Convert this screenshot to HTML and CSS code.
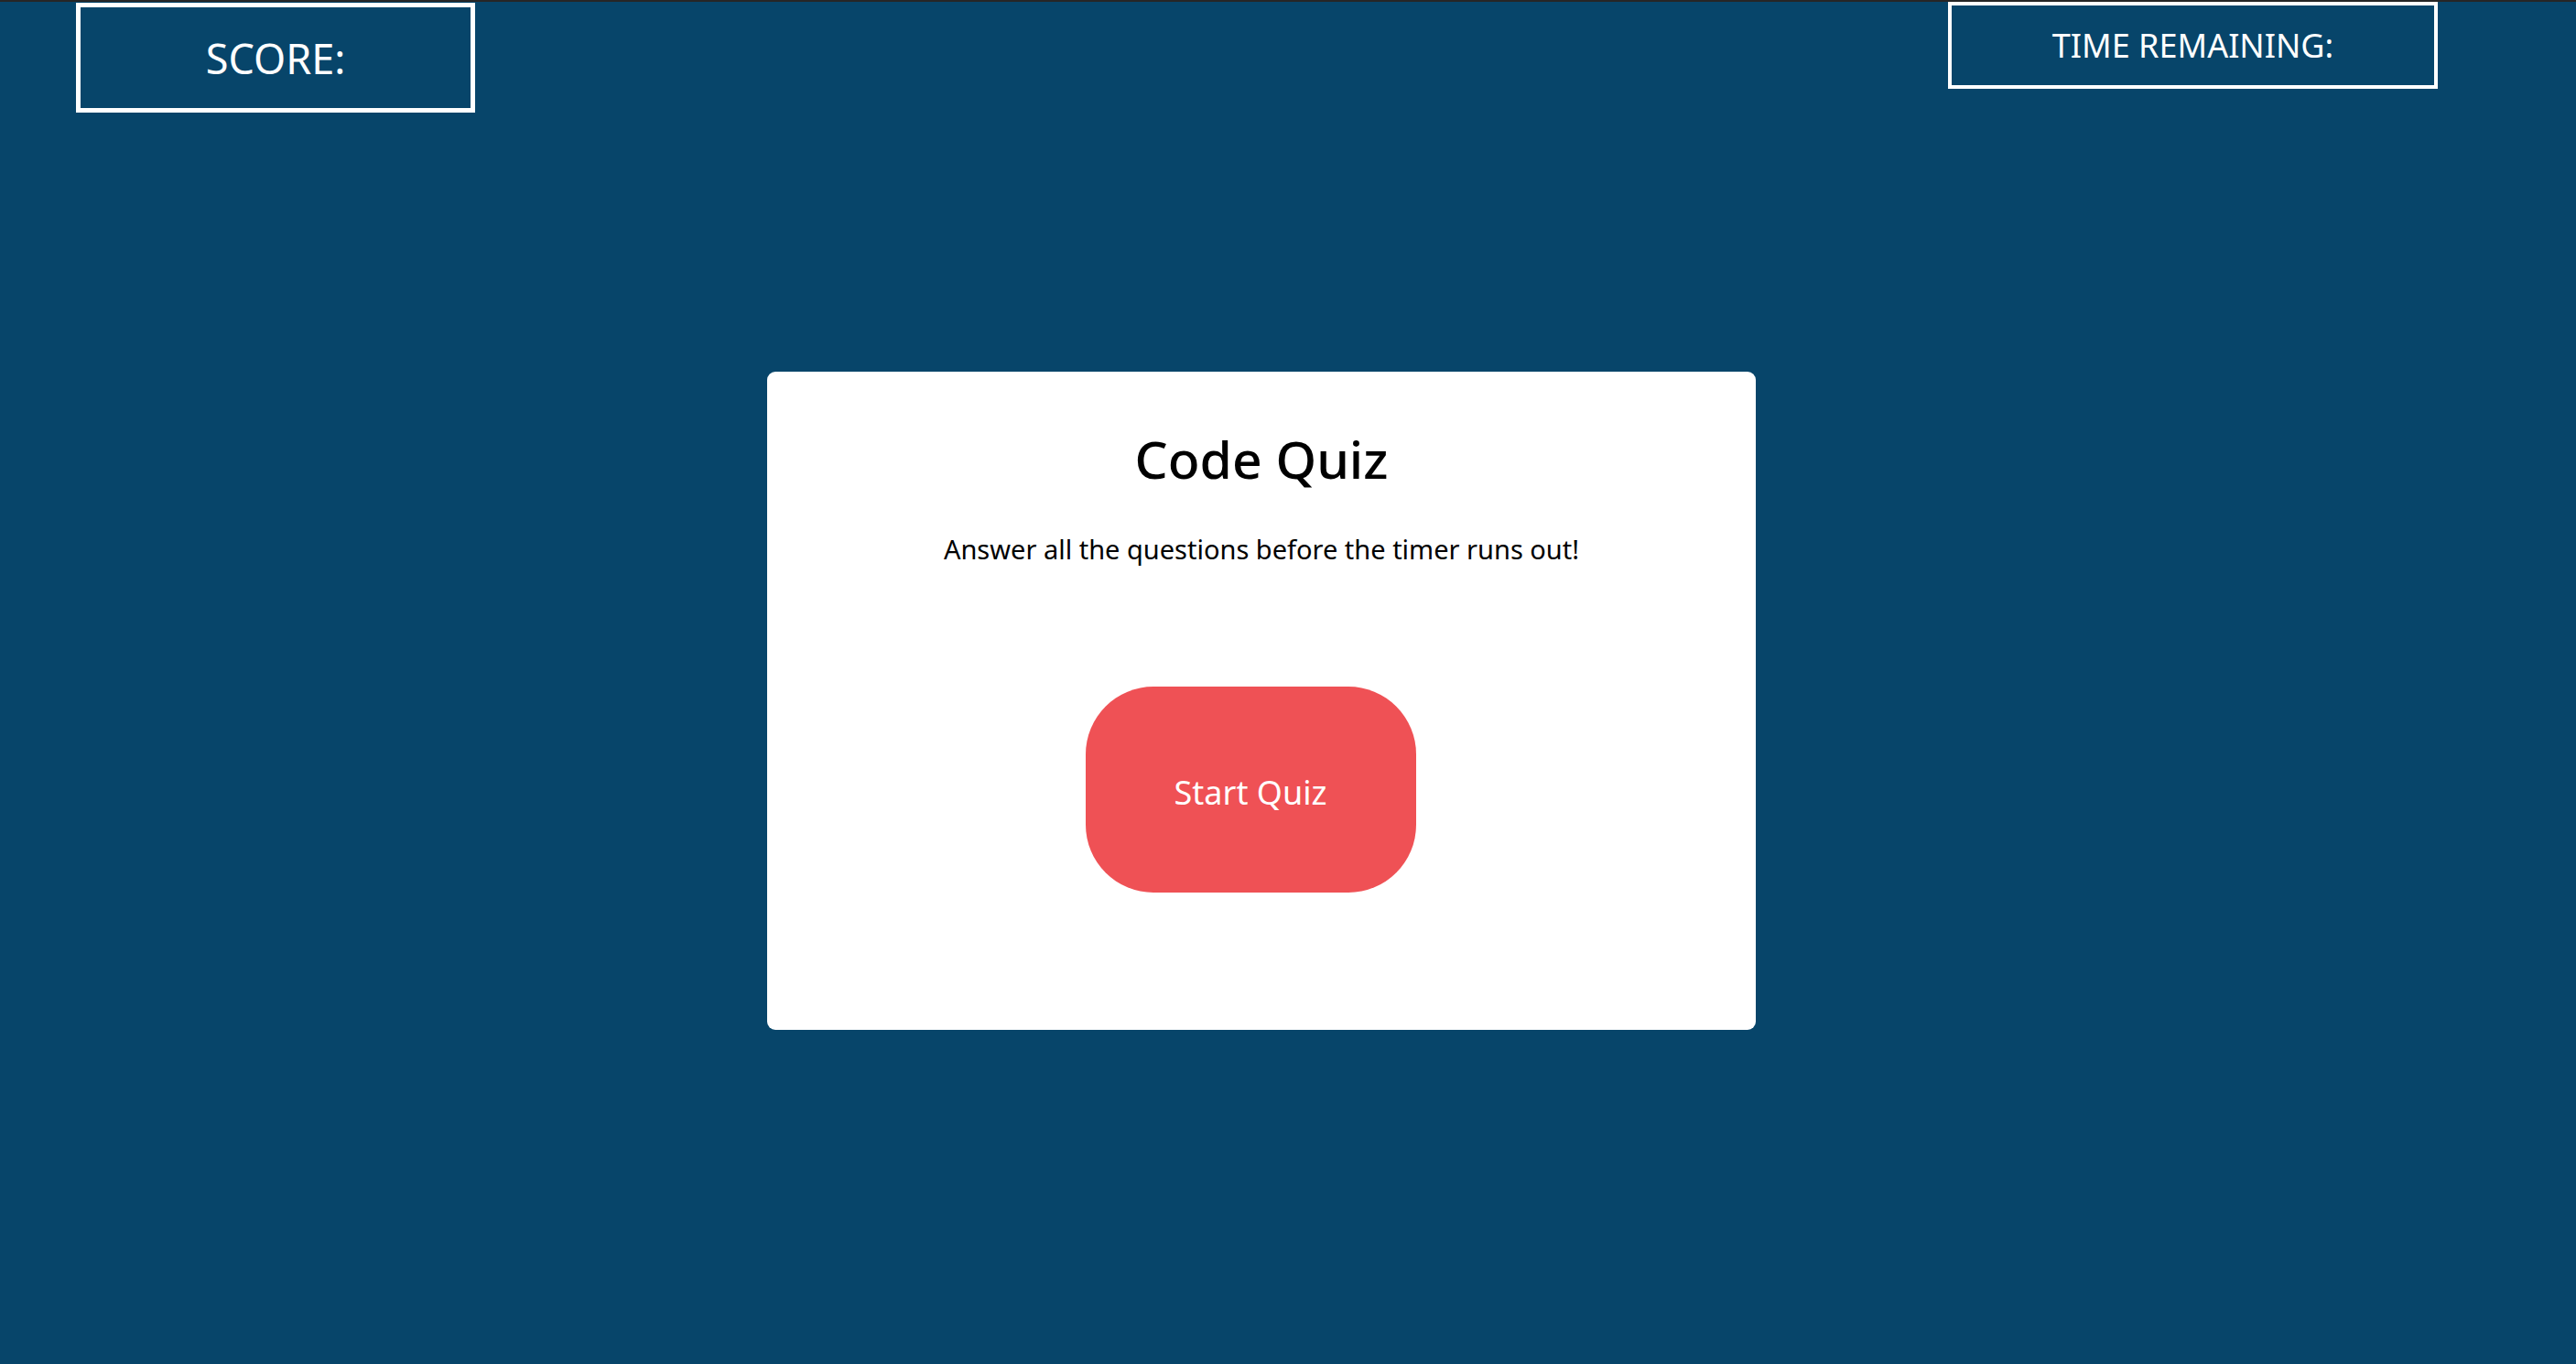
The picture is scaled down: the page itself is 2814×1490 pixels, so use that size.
FILE: index.html
```html
<!DOCTYPE html>
<html lang="en">
<head>
<meta charset="utf-8">
<title>Code Quiz</title>
<link rel="stylesheet" href="styles.css">
</head>
<body>
<div class="page">
  <header class="topbar">
    <div class="score">SCORE:</div>
    <div class="timer">TIME REMAINING:</div>
  </header>
  <main class="card">
    <h1 class="title">Code Quiz</h1>
    <p class="subtitle">Answer all the questions before the timer runs out!</p>
    <button class="start">Start Quiz</button>
  </main>
</div>
</body>
</html>
```

FILE: styles.css
```css
html, body {
  margin: 0;
  padding: 0;
  height: 100%;
}
body {
  background: #07456a;
  font-family: "Noto Sans", "Open Sans", sans-serif;
  color: #ffffff;
}
.page {
  border-top: 2px solid #262626;
  min-height: 100%;
  box-sizing: border-box;
}
.topbar {
  display: flex;
  justify-content: space-between;
  align-items: flex-start;
  padding: 0 151px 0 83px;
}
.score {
  box-sizing: border-box;
  width: 436px;
  height: 120px;
  margin-top: 1px;
  border: 5px solid #ffffff;
  display: flex;
  align-items: center;
  justify-content: center;
  font-size: 45px;
}
.timer {
  box-sizing: border-box;
  width: 535px;
  height: 95px;
  border: 4px solid #ffffff;
  display: flex;
  align-items: center;
  justify-content: center;
  font-size: 36px;
}
.card {
  box-sizing: border-box;
  width: 1080px;
  margin: 283px 0 0 838px;
  background: #ffffff;
  border-radius: 9px;
  padding: 56px 0 150px;
  display: flex;
  flex-direction: column;
  align-items: center;
  color: #000000;
}
.title {
  margin: 0;
  font-size: 57px;
  font-weight: 500;
  line-height: 79px;
}
.subtitle {
  margin: 40px 0 0;
  font-size: 29px;
  line-height: 38px;
}
.start {
  margin: 131px 24px 0 0;
  width: 361px;
  height: 225px;
  padding: 6px 0 0;
  border: none;
  border-radius: 74px;
  background: #ef5155;
  color: #ffffff;
  font-family: "Noto Sans", "Open Sans", sans-serif;
  font-size: 36px;
}
```
